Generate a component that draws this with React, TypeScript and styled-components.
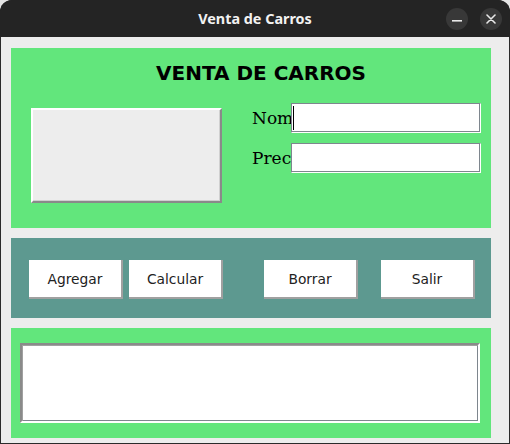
import React from "react";
import styled, { createGlobalStyle } from "styled-components";

const GlobalStyle = createGlobalStyle`
  html, body {
    margin: 0;
    padding: 0;
    background: #e4e4e4;
  }
  * {
    box-sizing: border-box;
  }
`;

const Window = styled.div`
  width: 510px;
  height: 444px;
  display: flex;
  flex-direction: column;
  border-radius: 12px 12px 0 0;
  overflow: hidden;
  background: #242424;
`;

const TitleBar = styled.div`
  position: relative;
  height: 37px;
  flex: none;
  display: flex;
  align-items: center;
  justify-content: center;
  background: #242424;
`;

const Title = styled.span`
  font-family: "Noto Sans", "DejaVu Sans", sans-serif;
  font-weight: 700;
  font-size: 14.4px;
  color: #f2f2f2;
`;

const WindowControls = styled.div`
  position: absolute;
  right: 8px;
  top: 8px;
  display: flex;
  gap: 12px;
`;

const ControlButton = styled.div`
  width: 22px;
  height: 22px;
  border-radius: 50%;
  background: #383838;
  display: flex;
  align-items: center;
  justify-content: center;
`;

const Content = styled.div`
  flex: 1;
  display: flex;
  flex-direction: column;
  gap: 10px;
  padding: 11px 0 0 10px;
  background: #ededed;
  border: 1px solid #2b2b2b;
  border-top: none;
`;

const Panel = styled.div<{ $bg: string; $height: number }>`
  width: 480px;
  height: ${({ $height }) => $height}px;
  flex: none;
  background: ${({ $bg }) => $bg};
`;

const HeaderPanel = styled(Panel)`
  display: flex;
  flex-direction: column;
  padding-top: 13px;
`;

const Heading = styled.h1`
  margin: 0;
  height: 24px;
  font-family: "DejaVu Sans", sans-serif;
  font-weight: 700;
  font-size: 20px;
  line-height: 24px;
  text-align: center;
  color: #000;
  padding-left: 20px;
`;

const Body = styled.div`
  display: flex;
  align-items: flex-start;
  padding-left: 20px;
`;

const ImageBox = styled.div`
  width: 191px;
  height: 95px;
  margin-top: 23px;
  background: #ededed;
  border: 2px solid;
  border-color: #ffffff #8a8a8a #8a8a8a #ffffff;
  box-shadow: inset -1px -1px 0 #d0d0d0;
`;

const Form = styled.div`
  display: flex;
  flex-direction: column;
  gap: 10px;
  margin-top: 18px;
  margin-left: 30px;
`;

const FieldRow = styled.div`
  display: flex;
  align-items: center;
`;

const FieldLabel = styled.span`
  width: 39px;
  white-space: nowrap;
  font-family: "DejaVu Serif", serif;
  font-size: 17px;
  color: #000;
`;

const Entry = styled.div`
  position: relative;
  width: 190px;
  height: 30px;
  background: #fff;
  border: 1px solid;
  border-color: #7e868e #ffffff #ffffff #7e868e;
  box-shadow: inset -1px -1px 0 #7e868e;
`;

const Caret = styled.span`
  position: absolute;
  left: 1px;
  top: 2px;
  width: 1px;
  height: 24px;
  background: #000;
`;

const ButtonPanel = styled(Panel)`
  display: flex;
  align-items: flex-start;
  padding: 22px 0 0 18px;
`;

const ActionButton = styled.button<{ $gap?: number }>`
  width: 94px;
  height: 39px;
  margin: 0 0 0 ${({ $gap }) => $gap ?? 0}px;
  padding: 0;
  background: #fff;
  border: none;
  border-right: 2px solid #a0a0a0;
  border-bottom: 2px solid #a0a0a0;
  font-family: "DejaVu Sans", sans-serif;
  font-size: 13.8px;
  color: #222;
  cursor: pointer;
`;

const OutputPanel = styled(Panel)`
  padding: 15px 0 0 9px;
`;

const OutputArea = styled.div`
  width: 460px;
  height: 80px;
  background: #fff;
  border: 2px solid;
  border-color: #8a8a8a #ffffff #ffffff #8a8a8a;
  box-shadow: inset 1px 1px 0 #a0a0a0, inset -1px -1px 0 #7e868e;
`;

const MinimizeIcon = () => (
  <svg width="10" height="10" viewBox="0 0 10 10">
    <rect x="0" y="6" width="10" height="1.6" fill="#e8e8e8" />
  </svg>
);

const CloseIcon = () => (
  <svg width="10" height="10" viewBox="0 0 10 10">
    <path d="M1 1 L9 9 M9 1 L1 9" stroke="#e8e8e8" strokeWidth="1.6" strokeLinecap="round" />
  </svg>
);

const buttons = [
  { label: "Agregar", gap: 0 },
  { label: "Calcular", gap: 6 },
  { label: "Borrar", gap: 41 },
  { label: "Salir", gap: 23 },
];

const App = () => {
  return (
    <>
      <GlobalStyle />
      <Window>
        <TitleBar>
          <Title>Venta de Carros</Title>
          <WindowControls>
            <ControlButton>
              <MinimizeIcon />
            </ControlButton>
            <ControlButton>
              <CloseIcon />
            </ControlButton>
          </WindowControls>
        </TitleBar>
        <Content>
          <HeaderPanel $bg="#62e67c" $height={180}>
            <Heading>VENTA DE CARROS</Heading>
            <Body>
              <ImageBox />
              <Form>
                <FieldRow>
                  <FieldLabel>Nom</FieldLabel>
                  <Entry>
                    <Caret />
                  </Entry>
                </FieldRow>
                <FieldRow>
                  <FieldLabel>Prec</FieldLabel>
                  <Entry />
                </FieldRow>
              </Form>
            </Body>
          </HeaderPanel>
          <ButtonPanel $bg="#5d9990" $height={80}>
            {buttons.map((b) => (
              <ActionButton key={b.label} $gap={b.gap}>
                {b.label}
              </ActionButton>
            ))}
          </ButtonPanel>
          <OutputPanel $bg="#62e67c" $height={110}>
            <OutputArea />
          </OutputPanel>
        </Content>
      </Window>
    </>
  );
};

export default App;
